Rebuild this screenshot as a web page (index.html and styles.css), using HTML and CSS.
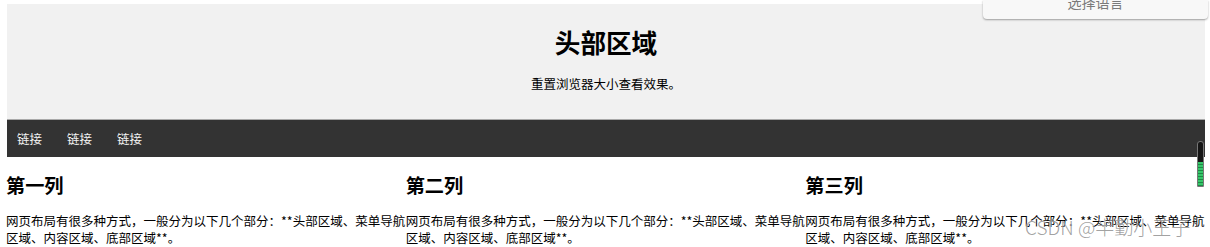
FILE: index.html
```html
<!DOCTYPE html>
<html lang="zh-CN">
<head>
<meta charset="utf-8">
<title>响应式布局</title>
<link rel="stylesheet" href="styles.css">
</head>
<body>
<div class="header">
  <h1>头部区域</h1>
  <p>重置浏览器大小查看效果。</p>
</div>
<div class="topnav">
  <a href="#">链接</a>
  <a href="#">链接</a>
  <a href="#">链接</a>
</div>
<div class="row">
  <div class="column">
    <h2>第一列</h2>
    <p>网页布局有很多种方式，一般分为以下几个部分：**头部区域、菜单导航区域、内容区域、底部区域**。</p>
  </div>
  <div class="column">
    <h2>第二列</h2>
    <p>网页布局有很多种方式，一般分为以下几个部分：**头部区域、菜单导航区域、内容区域、底部区域**。</p>
  </div>
  <div class="column">
    <h2>第三列</h2>
    <p>网页布局有很多种方式，一般分为以下几个部分：**头部区域、菜单导航区域、内容区域、底部区域**。</p>
  </div>
</div>
<div class="lang"><span class="lang-text">选择语言</span></div>
<div class="meter"></div>
<div class="watermark">CSDN @半勤小王子</div>
</body>
</html>
```
FILE: styles.css
```css
html, body {
  margin: 0;
  padding: 0;
  background: #fff;
}
body {
  font-family: "Noto Sans CJK SC", "Microsoft YaHei", sans-serif;
  color: #000;
  padding-top: 4px;
  overflow: hidden;
  height: 243px;
}
.header {
  margin: 0 5px 0 7px;
  background: #f1f1f1;
  text-align: center;
  padding: 21px 0 27px;
}
.header h1 {
  margin: 0;
  font-size: 25.6px;
  line-height: 34px;
  font-weight: bold;
}
.header p {
  margin: 16px 0 0;
  font-size: 12.5px;
  line-height: 17px;
}
.topnav {
  margin: 0 5px 0 7px;
  background: #333;
  border-top: 1px solid #a9a9a9;
  height: 37px;
  display: flex;
  gap: 25px;
  padding-left: 10px;
}
.topnav a {
  color: #f2f2f2;
  text-decoration: none;
  font-size: 12.5px;
  line-height: 37px;
}
.row {
  margin: 0 5px 0 6px;
  display: grid;
  grid-template-columns: repeat(3, 1fr);
}
.column h2 {
  margin: 16px 0 0;
  font-size: 19.2px;
  line-height: 25px;
  font-weight: bold;
}
.column p {
  margin: 14px 0 0;
  font-size: 12.5px;
  line-height: 17px;
}
.lang {
  position: absolute;
  top: 0;
  left: 983px;
  width: 225px;
  height: 19px;
  background: #f8f8f8;
  border-radius: 0 0 4px 4px;
  box-shadow: 0 1px 2px rgba(0, 0, 0, 0.35);
  overflow: hidden;
  text-align: center;
}
.lang-text {
  position: relative;
  top: -7px;
  display: block;
  font-size: 14px;
  line-height: 19px;
  color: #7a7a7a;
}
.meter {
  position: absolute;
  left: 1197px;
  top: 141px;
  width: 5px;
  height: 44px;
  border: 1px solid #777;
  border-radius: 3px 3px 1px 1px;
  background:
    repeating-linear-gradient(to bottom, #36c66a 0, #36c66a 2px, #1c8a44 2px, #1c8a44 3px) 0 20px / 100% 24px no-repeat,
    #151515;
}
.watermark {
  position: absolute;
  left: 1025px;
  top: 215px;
  font-size: 19px;
  line-height: 24px;
  font-weight: 300;
  color: rgba(120, 120, 120, 0.7);
  text-shadow: 0 0 1px rgba(255, 255, 255, 0.9);
  white-space: nowrap;
}
```
